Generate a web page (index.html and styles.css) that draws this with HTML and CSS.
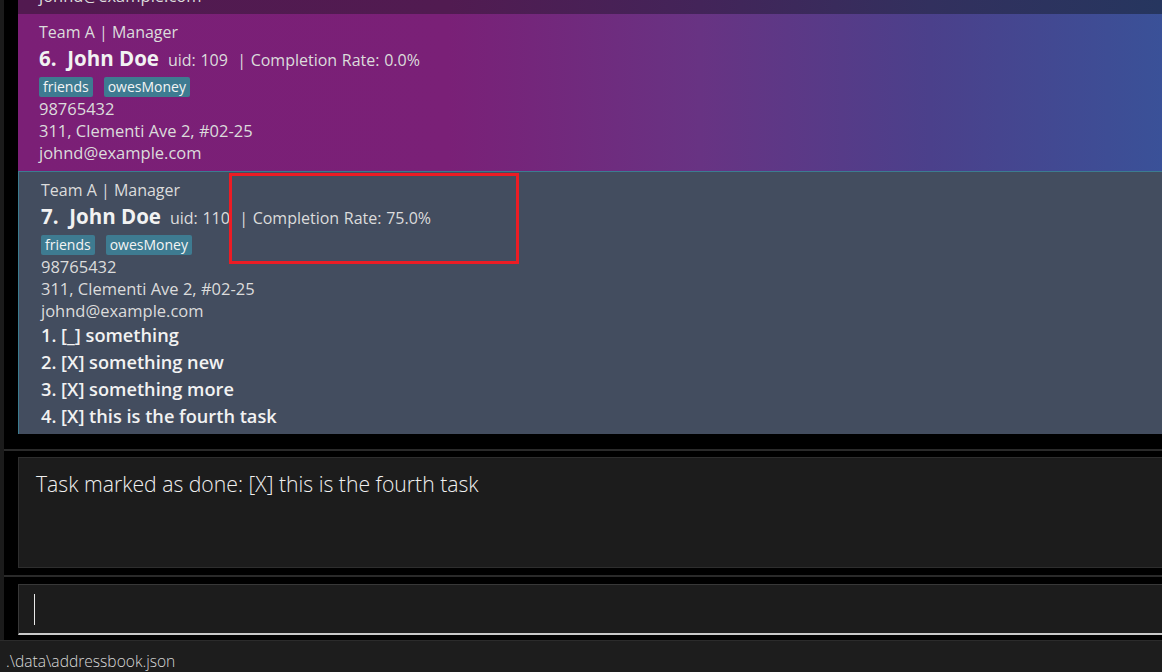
FILE: index.html
```html
<!DOCTYPE html>
<html>
<head>
<meta charset="utf-8">
<link rel="stylesheet" href="styles.css">
</head>
<body>
<div class="app">
  <div class="main">
    <div class="list-pane">
      <div class="list">
        <div class="card card-odd">
          <div class="team">Team A | Manager</div>
          <div class="name-row"><span class="name">5.&nbsp; John Doe</span><span class="meta">uid: 108 &nbsp;| Completion Rate: 0.0%</span></div>
          <div class="tags"><span class="tag">friends</span><span class="tag">owesMoney</span></div>
          <div class="line">98765432</div>
          <div class="line">311, Clementi Ave 2, #02-25</div>
          <div class="line">johnd@example.com</div>
        </div>
        <div class="card card-even">
          <div class="team">Team A | Manager</div>
          <div class="name-row"><span class="name">6.&nbsp; John Doe</span><span class="meta">uid: 109 &nbsp;| Completion Rate: 0.0%</span></div>
          <div class="tags"><span class="tag">friends</span><span class="tag">owesMoney</span></div>
          <div class="line">98765432</div>
          <div class="line">311, Clementi Ave 2, #02-25</div>
          <div class="line">johnd@example.com</div>
        </div>
        <div class="card card-selected">
          <div class="team">Team A | Manager</div>
          <div class="name-row"><span class="name">7.&nbsp; John Doe</span><span class="meta">uid: 110 &nbsp;| Completion Rate: 75.0%</span></div>
          <div class="tags"><span class="tag">friends</span><span class="tag">owesMoney</span></div>
          <div class="line">98765432</div>
          <div class="line">311, Clementi Ave 2, #02-25</div>
          <div class="line">johnd@example.com</div>
          <div class="tasks">
            <div class="task">1. [_] something</div>
            <div class="task">2. [X] something new</div>
            <div class="task">3. [X] something more</div>
            <div class="task">4. [X] this is the fourth task</div>
          </div>
        </div>
      </div>
    </div>
    <div class="divider"></div>
    <div class="result-section">
      <div class="result-box">Task marked as done: [X] this is the fourth task</div>
    </div>
    <div class="divider"></div>
    <div class="command-section">
      <div class="command-box"><span class="caret"></span></div>
    </div>
  </div>
  <div class="status-bar">.\data\addressbook.json</div>
  <div class="highlight"></div>
</div>
</body>
</html>
```

FILE: styles.css
```css
* { box-sizing: border-box; }
html, body { margin: 0; padding: 0; }
body {
  width: 1162px;
  height: 672px;
  overflow: hidden;
  background: #1b1b1b;
  font-family: "Open Sans", "Noto Sans", sans-serif;
}
.app {
  position: relative;
  width: 1162px;
  height: 672px;
  display: flex;
  flex-direction: column;
  background: #1b1b1b;
}
.main {
  margin-left: 4px;
  height: 640px;
  background: #000;
  display: flex;
  flex-direction: column;
}
.list-pane {
  height: 449px;
  overflow: hidden;
  padding-left: 14px;
}
.list {
  margin-top: -143px;
  display: flex;
  flex-direction: column;
}
.card {
  padding: 8px 0 7px 21px;
  color: #dcdcdc;
  font-size: 16px;
}
.card-odd {
  height: 157px;
  background: linear-gradient(to right, #521a50 0px, #511b51 430px, #432459 682px, #32305e 912px, #26365f 1144px);
}
.card-even {
  height: 157px;
  background: linear-gradient(to right, #7b1f76 0px, #7a2077 430px, #683383 682px, #4b408b 912px, #3a5198 1144px);
}
.card-selected {
  height: 263px;
  background: #434d5f;
  border-top: 1px solid #3c7c90;
  border-left: 1px solid #3c7c90;
  padding-left: 22px;
  padding-bottom: 5px;
}
.team {
  height: 20px;
  line-height: 20px;
}
.name-row {
  height: 32px;
  line-height: 32px;
  display: flex;
  align-items: baseline;
  gap: 9px;
}
.name {
  font-size: 20.5px;
  font-weight: 700;
  color: #f2f2f2;
}
.meta {
  font-size: 16px;
  white-space: pre;
  word-spacing: 0.5px;
}
.tags {
  margin-top: 3px;
  height: 21px;
  display: flex;
  gap: 11px;
}
.tag {
  background: #3e7b91;
  color: #f4f4f4;
  font-size: 14px;
  line-height: 20px;
  height: 20px;
  padding: 0 4px;
  border-radius: 2px;
}
.line {
  height: 22px;
  line-height: 22px;
  font-size: 16.5px;
}
.task {
  height: 27px;
  line-height: 27px;
  font-size: 18.2px;
  font-weight: 600;
  color: #f2f2f2;
}
.divider {
  height: 2px;
  background: #2a2a2a;
}
.result-section {
  padding: 6px 0 7px 14px;
}
.result-box {
  height: 111px;
  background: #1c1c1c;
  border: 1px solid #2e2e2e;
  border-right: none;
  color: #f0f0f0;
  font-weight: 300;
  font-size: 21.2px;
  line-height: 28px;
  padding: 12px 0 0 17px;
}
.command-section {
  padding: 7px 0 5px 14px;
}
.command-box {
  height: 51px;
  background: #1c1c1c;
  border-top: 1px solid #383838;
  border-left: 1px solid #383838;
  border-bottom: 2px solid #c8c8c8;
  padding: 9px 0 0 15px;
}
.caret {
  display: block;
  width: 1px;
  height: 31px;
  background: #e8e8e8;
}
.status-bar {
  height: 32px;
  border-top: 1px solid #2b2b2b;
  background: #1d1d1d;
  color: #d8d8d8;
  font-size: 15.6px;
  font-weight: 300;
  line-height: 22px;
  padding: 9px 0 0 6px;
}
.highlight {
  position: absolute;
  left: 229px;
  top: 173px;
  width: 290px;
  height: 91px;
  border: 3px solid #ec1c24;
}
```
